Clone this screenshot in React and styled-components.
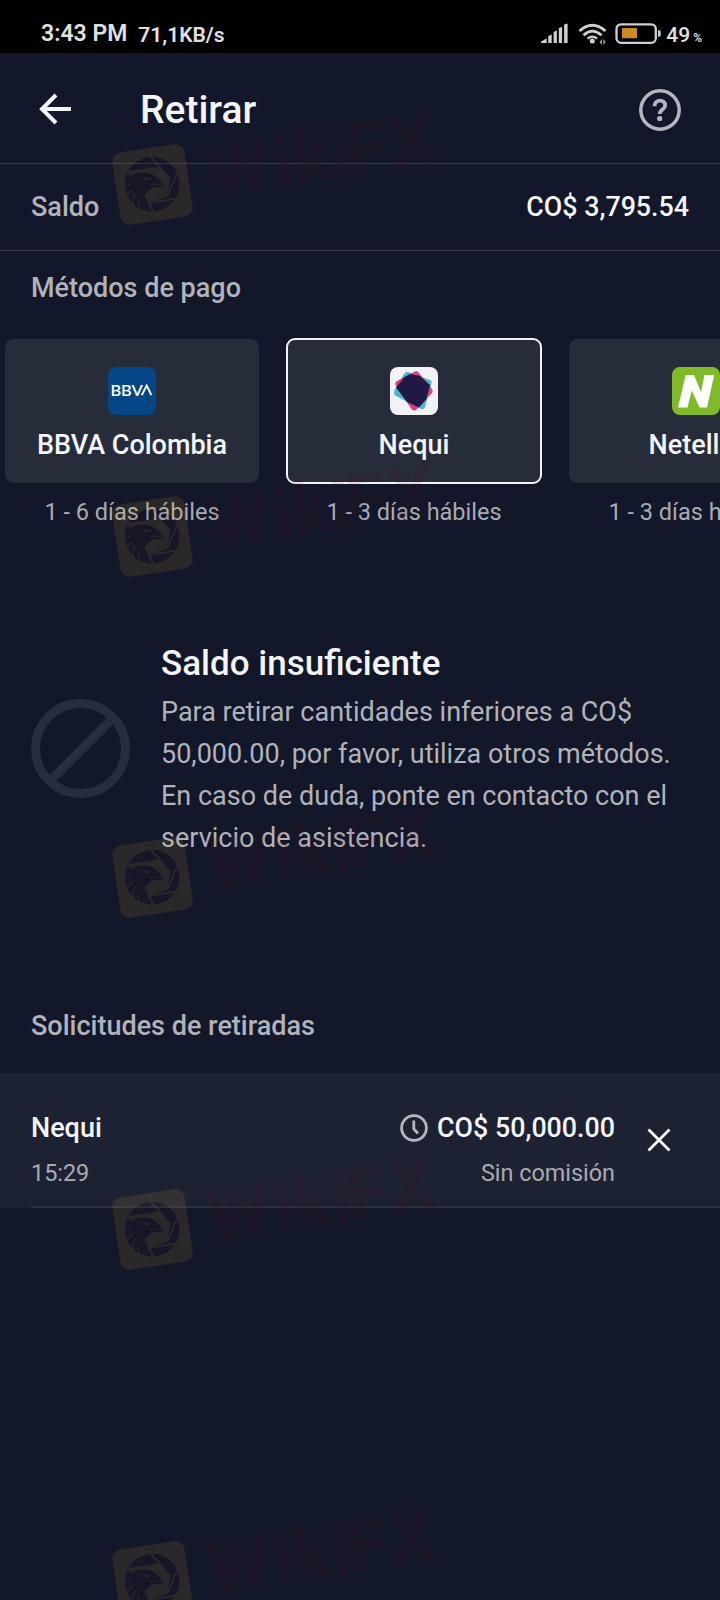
import React from "react";
import styled, { createGlobalStyle } from "styled-components";

const Global = createGlobalStyle`
  *, *::before, *::after { box-sizing: border-box; }
  body { margin: 0; background: #121729; }
`;

const Screen = styled.div`
  position: relative;
  width: 720px;
  height: 1600px;
  overflow: hidden;
  display: flex;
  flex-direction: column;
  background: #121729;
  color: #f4f5f9;
  font-family: Roboto, "Liberation Sans", sans-serif;
`;

const StatusBar = styled.div`
  flex: none;
  height: 53px;
  padding: 16px 18px 0 41px;
  display: flex;
  align-items: flex-start;
  background: #000;
  color: #e0e0e0;
`;

const Clock = styled.span`
  font-size: 23px;
  line-height: 36px;
  font-weight: 600;
  white-space: nowrap;
`;

const NetSpeed = styled.span`
  margin-left: 11px;
  font-size: 21px;
  line-height: 38px;
  font-weight: 600;
  flex: 1;
`;

const StatusIcons = styled.svg`
  flex: none;
  width: 122px;
  height: 24px;
  margin-top: 6px;
`;

const BatteryText = styled.span`
  margin-left: 4px;
  font-size: 21px;
  line-height: 38px;
  font-weight: 500;
  white-space: nowrap;
  small { font-size: 12px; font-weight: 600; margin-left: 3px; }
`;

const Header = styled.header`
  flex: none;
  height: 111px;
  padding: 3px 39px 0;
  display: flex;
  align-items: center;
  border-bottom: 1px solid #343846;
`;

const Title = styled.h1`
  flex: 1;
  margin: 1px 0 0 69px;
  font-size: 39px;
  line-height: 48px;
  font-weight: 500;
`;

const BackIcon = styled.svg`
  width: 32px;
  height: 32px;
  margin-top: -1px;
`;

const HelpIcon = styled.svg`
  width: 42px;
  height: 42px;
  margin-top: 1px;
`;

const BalanceRow = styled.div`
  flex: none;
  height: 87px;
  padding: 0 31px;
  display: flex;
  align-items: center;
  justify-content: space-between;
  border-bottom: 1px solid #343846;
`;

const Label = styled.span`
  font-size: ${(p) => (p.$money ? 26.8 : 27)}px;
  line-height: 36px;
  font-weight: 500;
  color: ${(p) => (p.$muted ? "#b1b3bb" : "#f4f5f9")};
`;

const SectionTitle = styled.h2`
  flex: none;
  margin: ${(p) => p.$top}px 31px 0;
  font-size: 27px;
  line-height: 36px;
  font-weight: 500;
  color: #b1b3bb;
`;

const Methods = styled.div`
  flex: none;
  display: flex;
  gap: 26px;
  margin: 32px 0 0 4px;
`;

const Method = styled.div`
  flex: none;
  width: 256px;
  display: flex;
  flex-direction: column;
  align-items: center;
`;

const MethodCard = styled.div`
  width: 256px;
  height: 146px;
  padding-top: ${(p) => (p.$selected ? 27 : 28)}px;
  display: flex;
  flex-direction: column;
  align-items: center;
  gap: 12px;
  border-radius: 9px;
  border: ${(p) => (p.$selected ? "2px solid #f4f5f9" : "1px solid #121729")};
  background: #272c3b;
  background-clip: padding-box;
`;

const Logo = styled.svg`
  width: 48px;
  height: 48px;
  border-radius: 8px;
`;

const Term = styled.span`
  margin-top: 12px;
  font-size: 23.5px;
  line-height: 32px;
  color: #a9abb3;
  white-space: nowrap;
`;

const Notice = styled.section`
  flex: none;
  margin: 115px 31px 0;
  display: flex;
  align-items: flex-start;
  gap: 31px;
`;

const BanIcon = styled.svg`
  flex: none;
  width: 99px;
  height: 99px;
  margin-top: 56px;
`;

const NoticeTitle = styled.h3`
  margin: 0 0 6px;
  font-size: 35px;
  line-height: 42px;
  font-weight: 500;
`;

const NoticeText = styled.p`
  margin: 0;
  font-size: 27px;
  line-height: 42px;
  color: #b1b3bb;
  white-space: nowrap;
`;

const Request = styled.div`
  flex: none;
  height: 135px;
  margin-top: 29px;
  padding-left: 31px;
  background: #1d2233;
`;

const RequestInner = styled.div`
  height: 135px;
  padding: 37px 49px 0 0;
  display: flex;
  border-bottom: 2px solid #2b3040;
`;

const RequestColumn = styled.div`
  display: flex;
  flex-direction: column;
  gap: 11px;
  flex: ${(p) => (p.$grow ? 1 : "none")};
  align-items: ${(p) => (p.$grow ? "flex-start" : "flex-end")};
`;

const Amount = styled.div`
  display: flex;
  align-items: center;
  gap: 9px;
`;

const Caption = styled.span`
  font-size: 23.4px;
  line-height: 32px;
  color: #a9abb3;
`;

const ClockIcon = styled.svg`
  width: 28px;
  height: 28px;
`;

const CloseIcon = styled.svg`
  width: 24px;
  height: 24px;
  margin: 18px 0 0 32px;
`;

const Overlay = styled.svg`
  position: absolute;
  inset: 0;
  pointer-events: none;
`;

const GOLD = "rgb(250,190,40)";
const WINE = "rgb(92,4,20)";

function Mark({ y }) {
  return (
    <g transform={`translate(152.5 ${y})`} opacity="0.1">
      <rect x="-36.5" y="-36.5" width="73" height="73" rx="9" fill={GOLD} transform="rotate(-8.7)" />
      <g transform="scale(0.3333) translate(-187 -283)">
        <circle cx="186" cy="282" r="82" fill={WINE} />
        <path d="M112 246 L205 232 L240 268 L230 320 L176 338 Z" fill={GOLD} />
        <path
          d="M180 198 L240 268 M264 243 L230 320 M260 325 L176 338 L191 367 M106 247 L205 232"
          fill="none" stroke={GOLD} strokeWidth="6"
        />
        <path
          d="M104 292 C104 268 122 250 150 247 C188 244 208 262 222 292 C210 287 204 291 190 292 C170 299 157 318 163 335 C166 350 172 358 180 364 A82 82 0 0 1 104 286 Z"
          fill={WINE}
        />
        <path d="M158 261 L183 266 L168 271 Z" fill={GOLD} />
        <path
          d="M182 284 Q200 278 214 286 M106 290 L124 281 M107 318 Q118 302 130 297 M131 348 Q125 325 136 309 M150 362 Q141 342 147 326"
          fill="none" stroke={GOLD} strokeWidth="3.5"
        />
      </g>
      <g transform="translate(60 12) rotate(-8.9)">
        <text
          x="0 67 86 125 140 184"
          y="0"
          fontFamily="Roboto, sans-serif"
          fontWeight="500"
          fontSize="69"
          fill={WINE}
          stroke={WINE}
          strokeWidth="2"
          strokeLinejoin="round"
        >WikiFX</text>
      </g>
    </g>
  );
}

const methods = [
  { name: "BBVA Colombia", term: "1 - 6 días hábiles", logo: "bbva" },
  { name: "Nequi", term: "1 - 3 días hábiles", logo: "nequi", selected: true },
  { name: "Neteller", term: "1 - 3 días hábiles", logo: "neteller" },
];

function MethodLogo({ kind }) {
  if (kind === "bbva") {
    return (
      <Logo viewBox="0 0 48 48">
        <rect width="48" height="48" fill="#044686" />
        <text x="2.4" y="28.5" fontFamily="Lato, sans-serif" fontWeight="600" fontSize="14.3" textLength="32.5" lengthAdjust="spacingAndGlyphs" fill="#fff">BBV</text>
        <path d="M33.7 28.2 L38.7 18.5 L43.4 28.2" fill="none" stroke="#fff" strokeWidth="1.9" />
      </Logo>
    );
  }
  if (kind === "nequi") {
    return (
      <Logo viewBox="0 0 48 48">
        <rect width="48" height="48" fill="#f2f2f4" />
        <path d="M18 5 L40 13 Q42 14 41.5 16 L35 40 Q34 43 31 42 L6 29 Q3 27 4.5 23 L14 7 Q15.5 4.5 18 5 Z" fill="#4eb7cd" />
        <path d="M7 14 L25 4.5 Q27 3 29 6 L42 22 Q43.5 24 42 26 L27 42 Q24 45 21.5 42 L5.5 18 Q4.5 15.5 7 14 Z" fill="#dc3f80" />
        <path d="M14.5 10 L20 7 L29.5 8.7 L40 18 L36.5 32 L29 40.5 L17 35 L6 20.5 Z" fill="#211945" />
      </Logo>
    );
  }
  return (
    <Logo viewBox="0 0 48 48">
      <rect width="48" height="48" fill="#7fba28" />
      <path d="M13.7 8 H22 L29 25 L32.5 8 H42.2 L35 40.5 H27.5 L19.7 23.5 L15.5 40.5 H6 Z" fill="#fff" />
    </Logo>
  );
}

export default function App() {
  return (
    <Screen>
      <Global />
      <StatusBar>
        <Clock>3:43 PM</Clock>
        <NetSpeed>71,1KB/s</NetSpeed>
        <StatusIcons viewBox="0 0 122 24" fill="#cfcfcf">
          <path d="M1 21 V19.8 L6.7 16.3 V21 Z M8.3 14 L11.7 12.5 V21 H8.3 Z M13.6 10 L16.9 8.6 V21 H13.6 Z M18.8 6.2 L22.1 4.8 V21 H18.8 Z M24.1 2.6 L27.6 1.6 V21 H24.1 Z" />
          <g fill="none" stroke="#cfcfcf" strokeWidth="2.8">
            <path d="M39.5 9 Q52.3 -2.5 65.5 9" />
            <path d="M43.5 13.2 Q52.3 5 61.5 13.2" />
            <path d="M47.5 16.6 Q52.3 12.5 57.2 16.6" strokeWidth="2.2" />
            <rect x="76.5" y="2.3" width="39.3" height="18.5" rx="4.5" strokeWidth="2.3" />
          </g>
          <circle cx="52.3" cy="19" r="2.5" />
          <path d="M59.5 20 L62 17 V23 Z M65.7 20 L63.3 23 V17 Z" fillOpacity="0.75" />
          <rect x="82" y="6" width="15" height="10.3" rx="1" fill="#cb8b22" />
          <path d="M118 8.3 H119.3 Q120.7 8.3 120.7 10 V13 Q120.7 14.7 119.3 14.7 H118 Z" />
        </StatusIcons>
        <BatteryText>49<small>%</small></BatteryText>
      </StatusBar>
      <Header>
        <BackIcon viewBox="0 0 32 32" fill="none" stroke="#f4f5f9" strokeWidth="4">
          <path d="M17 2 L3 16 L17 30 M3 16 H32" />
        </BackIcon>
        <Title>Retirar</Title>
        <HelpIcon viewBox="0 0 42 42" fill="none" stroke="#b5b5c0">
          <circle cx="21" cy="21" r="19.2" strokeWidth="3.5" />
          <path d="M15.5 17.2 C15.5 9.8 26.2 9.8 26.2 16.5 C26.2 20 20.7 20.5 20.7 25" strokeWidth="3.8" />
          <circle cx="20.7" cy="29.5" r="2.6" fill="#b5b5c0" stroke="none" />
        </HelpIcon>
      </Header>
      <BalanceRow>
        <Label $muted>Saldo</Label>
        <Label $money>CO$ 3,795.54</Label>
      </BalanceRow>
      <SectionTitle $top={19}>Métodos de pago</SectionTitle>
      <Methods>
        {methods.map((m) => (
          <Method key={m.name}>
            <MethodCard $selected={m.selected}>
              <MethodLogo kind={m.logo} />
              <Label>{m.name}</Label>
            </MethodCard>
            <Term>{m.term}</Term>
          </Method>
        ))}
      </Methods>
      <Notice>
        <BanIcon viewBox="0 0 99 99" fill="none" stroke="#272d3c" strokeWidth="9">
          <circle cx="49.5" cy="49.5" r="45" />
          <path d="M22 79 L79 22" />
        </BanIcon>
        <div>
          <NoticeTitle>Saldo insuficiente</NoticeTitle>
          <NoticeText>
            Para retirar cantidades inferiores a CO$<br />
            50,000.00, por favor, utiliza otros métodos.<br />
            En caso de duda, ponte en contacto con el<br />
            servicio de asistencia.
          </NoticeText>
        </div>
      </Notice>
      <SectionTitle $top={149}>Solicitudes de retiradas</SectionTitle>
      <Request>
        <RequestInner>
          <RequestColumn $grow>
            <Label>Nequi</Label>
            <Caption>15:29</Caption>
          </RequestColumn>
          <RequestColumn>
            <Amount>
              <ClockIcon viewBox="0 0 28 28" fill="none" stroke="#b5b5c0" strokeWidth="2.8">
                <circle cx="14" cy="14" r="12.4" />
                <path d="M13.8 6.5 V15 L18 19.5" />
              </ClockIcon>
              <Label $money>CO$ 50,000.00</Label>
            </Amount>
            <Caption>Sin comisión</Caption>
          </RequestColumn>
          <CloseIcon viewBox="0 0 24 24" stroke="#fff" strokeWidth="2.8">
            <path d="M1.5 1.5 L22.5 22.5 M22.5 1.5 L1.5 22.5" />
          </CloseIcon>
        </RequestInner>
      </Request>
      <Overlay width="720" height="1600" viewBox="0 0 720 1600">
        {[184.5, 536.5, 877.5, 1229.5, 1581.5].map((y) => <Mark key={y} y={y} />)}
      </Overlay>
    </Screen>
  );
}
